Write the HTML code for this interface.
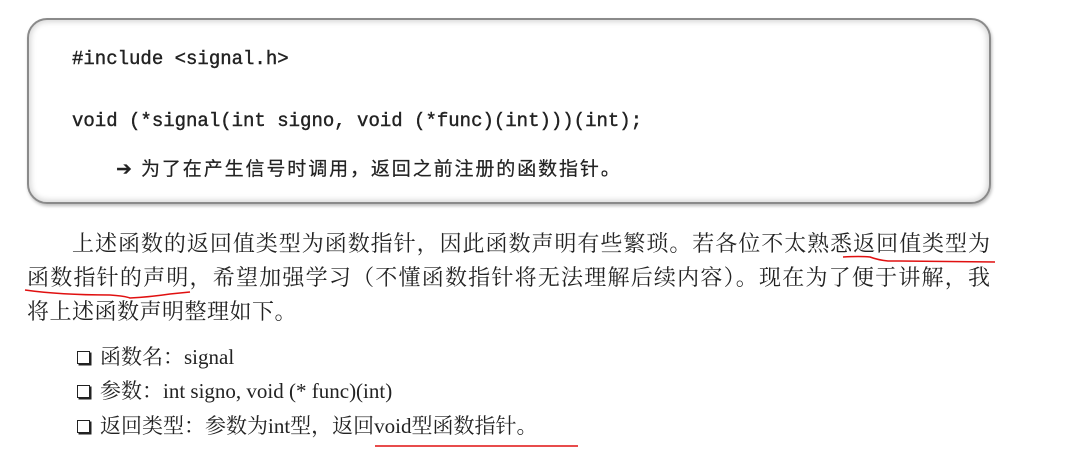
<!DOCTYPE html>
<html><head><meta charset="utf-8"><style>
body{margin:0;width:1083px;height:451px;background:#fff;position:relative;overflow:hidden;}
.box{position:absolute;left:27px;top:18px;width:960px;height:182px;border:2px solid #8a8a8a;border-radius:20px;box-shadow:inset 0 0 6px 2px #d8d8d8, 1px 2px 3px #bbb;background:#fff;}
.code{position:absolute;left:72px;font-family:"Liberation Mono",monospace;font-size:19px;color:#222;white-space:pre;-webkit-text-stroke:0.4px #222;}
.arrow{position:absolute;left:116px;top:154px;font-family:"Liberation Sans","Noto Sans CJK SC",sans-serif;font-size:19px;color:#222;letter-spacing:1.9px;white-space:nowrap;-webkit-text-stroke:0.2px #222;}
.p{position:absolute;font-family:"Liberation Serif","Noto Serif CJK SC",serif;font-size:22px;color:#222;white-space:nowrap;text-align:justify;text-align-last:justify;height:28px;line-height:28px;}
.li{position:absolute;left:77px;font-family:"Liberation Serif","Noto Serif CJK SC",serif;font-size:21px;color:#222;white-space:nowrap;line-height:28px;}
.cb{display:inline-block;width:11px;height:11px;border:1.5px solid #222;box-shadow:1.5px 1.5px 0 #222;margin-right:10px;vertical-align:0px;}
</style></head><body>
<div class="box"></div>
<div class="code" style="top:48px;">#include &lt;signal.h&gt;</div>
<div class="code" style="top:110px;">void (*signal(int signo, void (*func)(int)))(int);</div>
<div class="arrow">➔ 为了在产生信号时调用，返回之前注册的函数指针。</div>
<div class="p" style="left:72px;top:230px;width:918px;">上述函数的返回值类型为函数指针，因此函数声明有些繁琐。若各位不太熟悉返回值类型为</div>
<div class="p" style="left:27px;top:264px;width:963px;">函数指针的声明，希望加强学习（不懂函数指针将无法理解后续内容）。现在为了便于讲解，我</div>
<div class="p" style="left:27px;top:298px;text-align:left;text-align-last:left;letter-spacing:0.5px;">将上述函数声明整理如下。</div>
<div class="li" style="top:343px;"><span class="cb"></span>函数名：signal</div>
<div class="li" style="top:377px;"><span class="cb"></span>参数：int signo, void (* func)(int)</div>
<div class="li" style="top:412px;"><span class="cb"></span>返回类型：参数为int型，返回void型函数指针。</div>
<svg style="position:absolute;left:0;top:0" width="1083" height="451">
<path d="M843 257 Q860 256 870 257 Q878 260 888 261 L900 261 L995 262" stroke="#e01010" stroke-width="1.5" fill="none"/>
<path d="M25 290 Q60 295 110 295 Q125 296 130 298 Q150 297 170 294 L190 292" stroke="#e01010" stroke-width="1.5" fill="none"/>
<path d="M375 446 L578 446" stroke="#e01010" stroke-width="1.5" fill="none"/>
</svg>
</body></html>
